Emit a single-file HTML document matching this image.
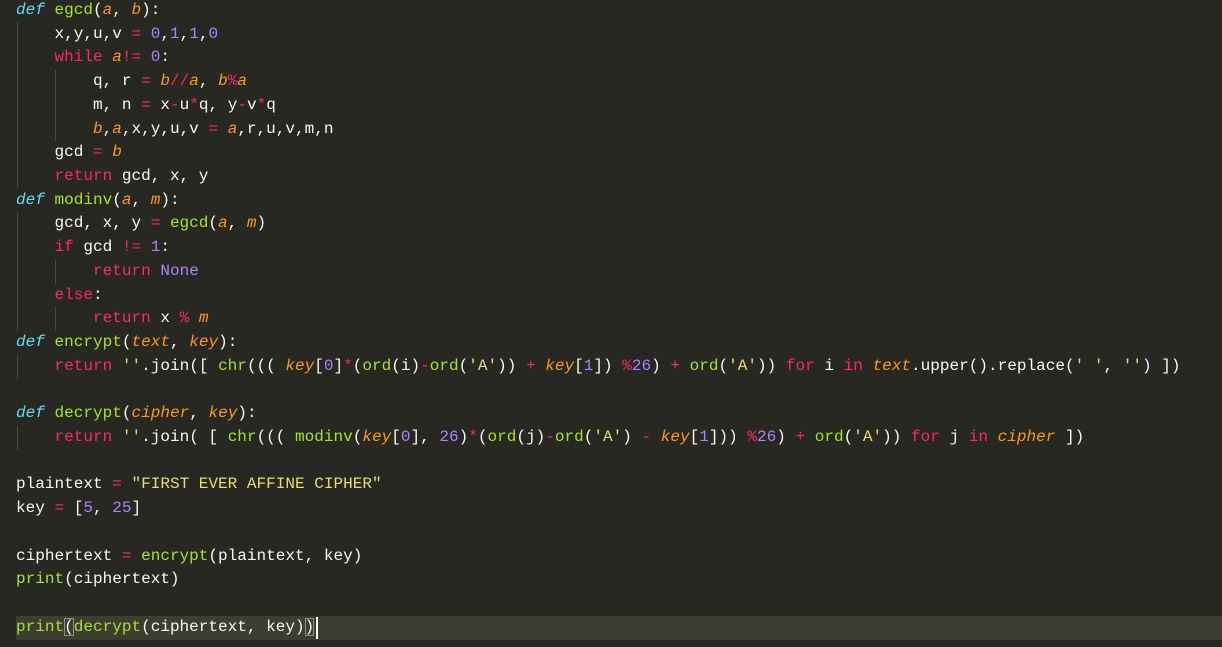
<!DOCTYPE html>
<html><head><meta charset="utf-8"><style>
html,body{margin:0;padding:0;background:#272822;width:1222px;height:647px;overflow:hidden}
.c{position:absolute;left:16px;top:-1px;font-family:"Liberation Mono",monospace;font-size:16.05px;line-height:23.73px;color:#f8f8f2}
.l{height:23.73px;position:relative;white-space:pre}
.k{color:#f92672}.d{color:#66d9ef;font-style:italic}.f{color:#a6e22e}.p{color:#fd971f;font-style:italic}.n{color:#ae81ff}.s{color:#e6db74}
.g{position:absolute;width:1px;background:#4a4a42}
.hl{position:absolute;left:16px;right:0;top:616px;height:24px;background:#3e3d32}
.br{outline:1px solid #8f8f87;outline-offset:-1px}
.cur{position:absolute;left:316px;top:617px;width:2px;height:22px;background:#f8f8f0}
</style></head><body>
<div class="hl"></div>
<div class="g" style="left:17px;top:22px;height:166px"></div>
<div class="g" style="left:55px;top:70px;height:71px"></div>
<div class="g" style="left:17px;top:212px;height:119px"></div>
<div class="g" style="left:55px;top:260px;height:24px"></div>
<div class="g" style="left:55px;top:307px;height:24px"></div>
<div class="g" style="left:17px;top:355px;height:24px"></div>
<div class="g" style="left:17px;top:426px;height:24px"></div>
<div class="c"><div class="l"><span class="d">def</span> <span class="f">egcd</span>(<span class="p">a</span>, <span class="p">b</span>):</div><div class="l">    x,y,u,v <span class="k">=</span> <span class="n">0</span>,<span class="n">1</span>,<span class="n">1</span>,<span class="n">0</span></div><div class="l">    <span class="k">while</span> <span class="p">a</span><span class="k">!=</span> <span class="n">0</span>:</div><div class="l">        q, r <span class="k">=</span> <span class="p">b</span><span class="k">//</span><span class="p">a</span>, <span class="p">b</span><span class="k">%</span><span class="p">a</span></div><div class="l">        m, n <span class="k">=</span> x<span class="k">-</span>u<span class="k">*</span>q, y<span class="k">-</span>v<span class="k">*</span>q</div><div class="l">        <span class="p">b</span>,<span class="p">a</span>,x,y,u,v <span class="k">=</span> <span class="p">a</span>,r,u,v,m,n</div><div class="l">    gcd <span class="k">=</span> <span class="p">b</span></div><div class="l">    <span class="k">return</span> gcd, x, y</div><div class="l"><span class="d">def</span> <span class="f">modinv</span>(<span class="p">a</span>, <span class="p">m</span>):</div><div class="l">    gcd, x, y <span class="k">=</span> <span class="f">egcd</span>(<span class="p">a</span>, <span class="p">m</span>)</div><div class="l">    <span class="k">if</span> gcd <span class="k">!=</span> <span class="n">1</span>:</div><div class="l">        <span class="k">return</span> <span class="n">None</span></div><div class="l">    <span class="k">else</span>:</div><div class="l">        <span class="k">return</span> x <span class="k">%</span> <span class="p">m</span></div><div class="l"><span class="d">def</span> <span class="f">encrypt</span>(<span class="p">text</span>, <span class="p">key</span>):</div><div class="l">    <span class="k">return</span> <span class="s">''</span>.join([ <span class="f">chr</span>((( <span class="p">key</span>[<span class="n">0</span>]<span class="k">*</span>(<span class="f">ord</span>(i)<span class="k">-</span><span class="f">ord</span>(<span class="s">'A'</span>)) <span class="k">+</span> <span class="p">key</span>[<span class="n">1</span>]) <span class="k">%</span><span class="n">26</span>) <span class="k">+</span> <span class="f">ord</span>(<span class="s">'A'</span>)) <span class="k">for</span> i <span class="k">in</span> <span class="p">text</span>.upper().replace(<span class="s">' '</span>, <span class="s">''</span>) ])</div><div class="l"> </div><div class="l"><span class="d">def</span> <span class="f">decrypt</span>(<span class="p">cipher</span>, <span class="p">key</span>):</div><div class="l">    <span class="k">return</span> <span class="s">''</span>.join( [ <span class="f">chr</span>((( <span class="f">modinv</span>(<span class="p">key</span>[<span class="n">0</span>], <span class="n">26</span>)<span class="k">*</span>(<span class="f">ord</span>(j)<span class="k">-</span><span class="f">ord</span>(<span class="s">'A'</span>) <span class="k">-</span> <span class="p">key</span>[<span class="n">1</span>])) <span class="k">%</span><span class="n">26</span>) <span class="k">+</span> <span class="f">ord</span>(<span class="s">'A'</span>)) <span class="k">for</span> j <span class="k">in</span> <span class="p">cipher</span> ])</div><div class="l"> </div><div class="l">plaintext <span class="k">=</span> <span class="s">"FIRST EVER AFFINE CIPHER"</span></div><div class="l">key <span class="k">=</span> [<span class="n">5</span>, <span class="n">25</span>]</div><div class="l"> </div><div class="l">ciphertext <span class="k">=</span> <span class="f">encrypt</span>(plaintext, key)</div><div class="l"><span class="f">print</span>(ciphertext)</div><div class="l"> </div><div class="l"><span class="f">print</span><span class="br">(</span><span class="f">decrypt</span>(ciphertext, key)<span class="br">)</span></div></div>
<div class="cur"></div>
</body></html>
